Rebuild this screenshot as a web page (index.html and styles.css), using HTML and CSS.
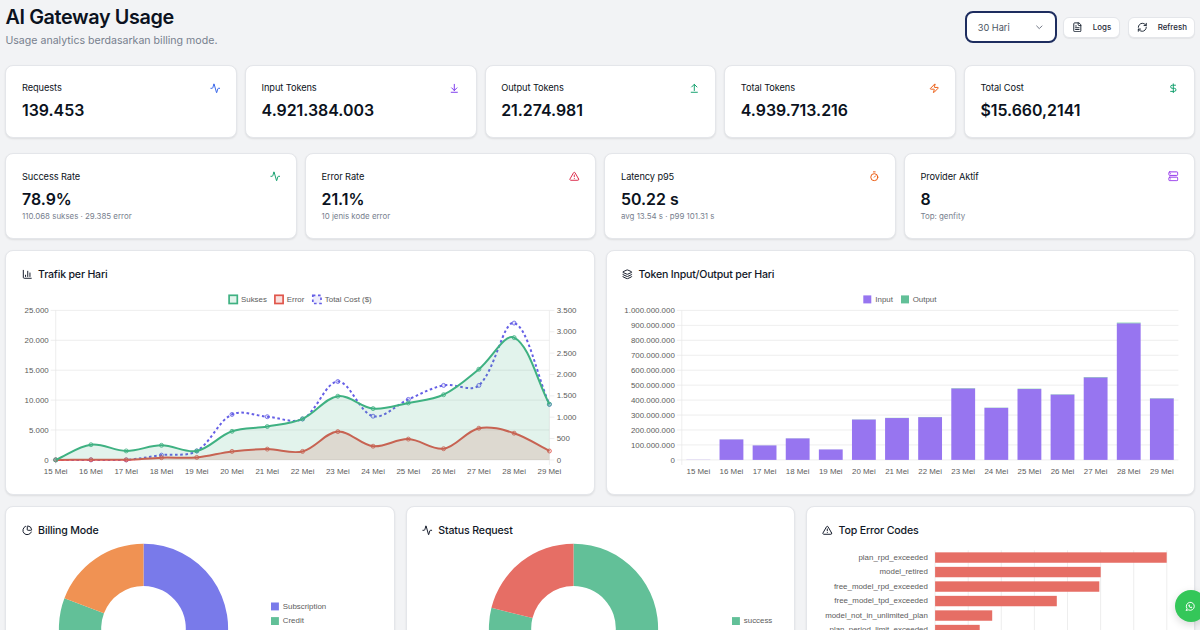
FILE: index.html
```html
<!DOCTYPE html>
<html lang="id">

<head>
    <meta charset="UTF-8">
    <meta name="viewport" content="width=device-width, initial-scale=1.0">
    <title>AI Gateway Usage</title>
    <link rel="stylesheet" href="styles.css">
</head>

<body>
    <!-- Icon set -->
    <svg class="icon-defs" aria-hidden="true">
        <symbol id="i-activity" viewBox="0 0 24 24"><path d="M22 12h-2.48a2 2 0 0 0-1.93 1.46l-2.35 8.36a.25.25 0 0 1-.48 0L9.24 2.18a.25.25 0 0 0-.48 0l-2.35 8.36A2 2 0 0 1 4.49 12H2"/></symbol>
        <symbol id="i-down" viewBox="0 0 24 24"><path d="M12 17V3M6 11l6 6 6-6M19 21H5"/></symbol>
        <symbol id="i-up" viewBox="0 0 24 24"><path d="m18 9-6-6-6 6M12 3v14M5 21h14"/></symbol>
        <symbol id="i-zap" viewBox="0 0 24 24"><path d="M4 14a1 1 0 0 1-.78-1.63l9.9-10.2a.5.5 0 0 1 .86.46l-1.92 6.02A1 1 0 0 0 13 10h7a1 1 0 0 1 .78 1.63l-9.9 10.2a.5.5 0 0 1-.86-.46l1.92-6.02A1 1 0 0 0 11 14z"/></symbol>
        <symbol id="i-dollar" viewBox="0 0 24 24"><path d="M12 2v20M17 5H9.5a3.5 3.5 0 0 0 0 7h5a3.5 3.5 0 0 1 0 7H6"/></symbol>
        <symbol id="i-alert" viewBox="0 0 24 24"><path d="m21.73 18-8-14a2 2 0 0 0-3.48 0l-8 14A2 2 0 0 0 4 21h16a2 2 0 0 0 1.73-3M12 9v4M12 17h.01"/></symbol>
        <symbol id="i-timer" viewBox="0 0 24 24"><path d="M10 2h4M12 14l3-3"/><circle cx="12" cy="14" r="8"/></symbol>
        <symbol id="i-server" viewBox="0 0 24 24"><rect x="2" y="2" width="20" height="8" rx="2"/><rect x="2" y="14" width="20" height="8" rx="2"/><path d="M6 6h.01M6 18h.01"/></symbol>
        <symbol id="i-chart" viewBox="0 0 24 24"><path d="M3 3v16a2 2 0 0 0 2 2h16M18 17V9M13 17V5M8 17v-3"/></symbol>
        <symbol id="i-layers" viewBox="0 0 24 24"><path d="M12.83 2.18a2 2 0 0 0-1.66 0L2.6 6.08a1 1 0 0 0 0 1.83l8.58 3.91a2 2 0 0 0 1.66 0l8.58-3.9a1 1 0 0 0 0-1.83zM2 12a1 1 0 0 0 .58.91l8.6 3.91a2 2 0 0 0 1.65 0l8.58-3.9A1 1 0 0 0 22 12M2 17a1 1 0 0 0 .58.91l8.6 3.91a2 2 0 0 0 1.65 0l8.58-3.9A1 1 0 0 0 22 17"/></symbol>
        <symbol id="i-pie" viewBox="0 0 24 24"><path d="M21 12c.552 0 1.005-.449.95-.998a10 10 0 0 0-8.953-8.951c-.55-.055-.998.398-.998.95v8a1 1 0 0 0 1 1zM21.21 15.89A10 10 0 1 1 8 2.83"/></symbol>
        <symbol id="i-file" viewBox="0 0 24 24"><path d="M15 2H6a2 2 0 0 0-2 2v16a2 2 0 0 0 2 2h12a2 2 0 0 0 2-2V7zM14 2v4a2 2 0 0 0 2 2h4M10 9H8M16 13H8M16 17H8"/></symbol>
        <symbol id="i-refresh" viewBox="0 0 24 24"><path d="M3 12a9 9 0 0 1 9-9 9.75 9.75 0 0 1 6.74 2.74L21 8M21 3v5h-5M21 12a9 9 0 0 1-9 9 9.75 9.75 0 0 1-6.74-2.74L3 16M8 16H3v5"/></symbol>
        <symbol id="i-chevron" viewBox="0 0 24 24"><path d="m6 9 6 6 6-6"/></symbol>
        <symbol id="i-whatsapp" viewBox="0 0 24 24"><path d="M3 21l1.65-3.8a9 9 0 1 1 3.4 2.9L3 21M9 10a.5.5 0 0 0 1 0V9a.5.5 0 0 0-1 0v1a5 5 0 0 0 5 5h1a.5.5 0 0 0 0-1h-1a.5.5 0 0 0 0 1"/></symbol>
    </svg>

    <header class="page-header">
        <div>
            <h1>AI Gateway Usage</h1>
            <p>Usage analytics berdasarkan billing mode.</p>
        </div>
        <div class="actions">
            <button class="select">30 Hari <svg class="icon"><use href="#i-chevron"/></svg></button>
            <button class="btn"><svg class="icon"><use href="#i-file"/></svg>Logs</button>
            <button class="btn"><svg class="icon"><use href="#i-refresh"/></svg>Refresh</button>
        </div>
    </header>

    <section class="grid stats-5">
        <div class="card stat">
            <div class="stat-label">Requests <svg class="icon blue"><use href="#i-activity"/></svg></div>
            <div class="stat-value">139.453</div>
        </div>
        <div class="card stat">
            <div class="stat-label">Input Tokens <svg class="icon violet"><use href="#i-down"/></svg></div>
            <div class="stat-value">4.921.384.003</div>
        </div>
        <div class="card stat">
            <div class="stat-label">Output Tokens <svg class="icon green"><use href="#i-up"/></svg></div>
            <div class="stat-value">21.274.981</div>
        </div>
        <div class="card stat">
            <div class="stat-label">Total Tokens <svg class="icon orange"><use href="#i-zap"/></svg></div>
            <div class="stat-value">4.939.713.216</div>
        </div>
        <div class="card stat">
            <div class="stat-label">Total Cost <svg class="icon green"><use href="#i-dollar"/></svg></div>
            <div class="stat-value">$15.660,2141</div>
        </div>
    </section>

    <section class="grid stats-4">
        <div class="card stat">
            <div class="stat-label">Success Rate <svg class="icon green"><use href="#i-activity"/></svg></div>
            <div class="stat-value">78.9%</div>
            <div class="stat-note">110.068 sukses · 29.385 error</div>
        </div>
        <div class="card stat">
            <div class="stat-label">Error Rate <svg class="icon red"><use href="#i-alert"/></svg></div>
            <div class="stat-value">21.1%</div>
            <div class="stat-note">10 jenis kode error</div>
        </div>
        <div class="card stat">
            <div class="stat-label">Latency p95 <svg class="icon orange"><use href="#i-timer"/></svg></div>
            <div class="stat-value">50.22 s</div>
            <div class="stat-note">avg 13.54 s · p99 101.31 s</div>
        </div>
        <div class="card stat">
            <div class="stat-label">Provider Aktif <svg class="icon purple"><use href="#i-server"/></svg></div>
            <div class="stat-value">8</div>
            <div class="stat-note">Top: genfity</div>
        </div>
    </section>

    <section class="grid charts-2">
        <div class="card chart-card">
            <h2><svg class="icon"><use href="#i-chart"/></svg>Trafik per Hari</h2>
            <svg id="trafficChart" class="chart"></svg>
        </div>
        <div class="card chart-card">
            <h2><svg class="icon"><use href="#i-layers"/></svg>Token Input/Output per Hari</h2>
            <svg id="tokenChart" class="chart"></svg>
        </div>
    </section>

    <section class="grid charts-3">
        <div class="card chart-card">
            <h2><svg class="icon"><use href="#i-pie"/></svg>Billing Mode</h2>
            <svg id="billingChart" class="chart"></svg>
        </div>
        <div class="card chart-card">
            <h2><svg class="icon"><use href="#i-activity"/></svg>Status Request</h2>
            <svg id="statusChart" class="chart"></svg>
        </div>
        <div class="card chart-card">
            <h2><svg class="icon"><use href="#i-alert"/></svg>Top Error Codes</h2>
            <svg id="errorChart" class="chart"></svg>
        </div>
    </section>

    <a class="whatsapp"><svg class="icon"><use href="#i-whatsapp"/></svg></a>

    <script src="charts.js"></script>
</body>

</html>
```
FILE: styles.css
```css
:root {
    --bg: #f2f3f5;
    --text: #0b1220;
    --muted: #77808e;
    --border: #e4e6ea;
    --navy: #1e2d5f;
}

* {
    margin: 0;
    padding: 0;
    box-sizing: border-box;
}

html {
    overflow: hidden;
}

body {
    background: var(--bg);
    color: var(--text);
    font-family: Inter, "Liberation Sans", sans-serif;
    height: 630px;
    padding: 5px 4.6px 0 5.4px;
    overflow: hidden;
}

.icon-defs {
    display: none;
}

.icon {
    width: 10.6px;
    height: 10.6px;
    flex: none;
    fill: none;
    stroke: currentColor;
    stroke-width: 2.2;
    stroke-linecap: round;
    stroke-linejoin: round;
}

.blue { color: #3563e9; }
.violet { color: #7c3aed; }
.purple { color: #9333ea; }
.green { color: #0f9f6b; }
.orange { color: #ea580c; }
.red { color: #dc2647; }

/* Header */
.page-header {
    display: flex;
    justify-content: space-between;
    height: 60.2px;
}

h1 {
    font-size: 19.8px;
    line-height: 25px;
    font-weight: 600;
    letter-spacing: -0.36px;
}

.page-header p {
    margin-top: 4px;
    font-size: 10.6px;
    line-height: 14px;
    color: var(--muted);
}

.actions {
    display: flex;
    align-items: center;
    height: 44px;
    gap: 8px;
}

button {
    display: flex;
    align-items: center;
    font-family: inherit;
    color: #1f2937;
    background: #fff;
}

.select {
    width: 91.5px;
    height: 32px;
    margin-right: -2px;
    padding: 0 10.5px;
    justify-content: space-between;
    border: 2px solid var(--navy);
    border-radius: 8px;
    font-size: 9.24px;
    color: #4b5563;
}

.select .icon {
    color: #6b7280;
}

.btn {
    height: 21px;
    padding: 0 7.5px 0 8px;
    gap: 10.5px;
    border: 1px solid var(--border);
    border-radius: 6px;
    font-size: 7.9px;
    font-weight: 450;
    box-shadow: 0 1px 1px rgba(0, 0, 0, 0.06);
}

/* Cards */
.grid {
    display: grid;
}

.card {
    background: #fff;
    border: 1px solid var(--border);
    border-radius: 8px;
    padding: 0 15.6px;
    box-shadow: 0 1px 2px rgba(0, 0, 0, 0.09);
}

.stats-5 {
    grid-template-columns: repeat(5, 1fr);
    gap: 8px;
    height: 72.5px;
    margin-bottom: 15.6px;
}

.stats-4 {
    grid-template-columns: repeat(4, 1fr);
    gap: 8px;
    height: 86px;
    margin-bottom: 11px;
}

.stat {
    padding-top: 15.3px;
}

.stats-4 .stat {
    padding-top: 16px;
}

.stat-label {
    display: flex;
    justify-content: space-between;
    align-items: center;
    height: 13px;
    font-size: 9.24px;
    letter-spacing: -0.08px;
}

.stat-value {
    margin-top: 6px;
    font-size: 15.9px;
    line-height: 21px;
    font-weight: 600;
}

.stat-note {
    margin-top: 1px;
    font-size: 7.9px;
    line-height: 10px;
    color: var(--muted);
}

/* Charts */
.charts-2 {
    grid-template-columns: repeat(2, 1fr);
    gap: 10.6px;
    height: 244.5px;
    margin-bottom: 11px;
}

.charts-3 {
    grid-template-columns: repeat(3, 1fr);
    gap: 10.6px;
    height: 240px;
}

.chart-card {
    padding-top: 17px;
}

h2 {
    display: flex;
    align-items: center;
    gap: 5.5px;
    height: 13px;
    font-size: 10.6px;
    font-weight: 500;
    letter-spacing: -0.2px;
    color: #111827;
}

.charts-3 h2 {
    letter-spacing: -0.15px;
}

.chart {
    display: block;
    width: 100%;
    height: 190px;
    margin-top: 10.4px;
    overflow: visible;
    font-family: "Liberation Sans", Arial, sans-serif;
    font-size: 7.9px;
    fill: #5c5c5c;
}

.whatsapp {
    position: fixed;
    left: 1175px;
    top: 590px;
    width: 32px;
    height: 32px;
    border-radius: 50%;
    display: flex;
    align-items: center;
    padding-left: 10px;
    background: #34c759;
    color: #fff;
    box-shadow: 0 3px 8px rgba(0, 0, 0, 0.15);
}
```
FILE: charts.js
```js
const GREEN = '#3fb182';
const RED = '#e0564b';
const INDIGO = '#655fe6';
const GRID = '#e6e6e6';

const days = [15, 16, 17, 18, 19, 20, 21, 22, 23, 24, 25, 26, 27, 28, 29].map(d => d + ' Mei');
const sukses = [0, 2540, 1500, 2440, 1500, 4780, 5580, 6870, 10650, 8580, 9520, 10900, 15160, 20450, 9320];
const errors = [0, 30, 10, 370, 420, 1420, 1805, 1420, 4730, 2290, 3480, 1870, 5300, 4465, 1490];
const cost = [0, 0, 0, 112, 208, 1064, 1011, 957, 1835, 1023, 1416, 1744, 1744, 3203, 1299];
const inputTokens = [1, 137, 97, 144, 70, 270, 280, 286, 478, 348, 474, 437, 552, 914, 411];

// Small SVG helpers
function line(x1, y1, x2, y2, color = GRID) {
    return `<line x1="${x1}" y1="${y1}" x2="${x2}" y2="${y2}" stroke="${color}" stroke-width="0.7"/>`;
}

function text(x, y, str, anchor = 'start') {
    return `<text x="${x}" y="${y}" text-anchor="${anchor}">${str}</text>`;
}

function rect(x, y, w, h, fill, extra = '') {
    return `<rect x="${x}" y="${y}" width="${w}" height="${h}" fill="${fill}" ${extra}/>`;
}

const format = n => n.toLocaleString('de-DE');

// Bezier curve through the points, control points scaled by distance
function spline(pts, top, bottom) {
    const t = 0.35;
    const clamp = y => Math.min(bottom, Math.max(top, y));
    const ctrl = pts.map((p, i) => {
        const a = pts[i - 1] || p;
        const b = pts[i + 1] || p;
        const d1 = Math.hypot(p[0] - a[0], p[1] - a[1]);
        const d2 = Math.hypot(b[0] - p[0], b[1] - p[1]);
        const fa = t * d1 / (d1 + d2);
        const fb = t * d2 / (d1 + d2);
        return {
            prev: [p[0] - fa * (b[0] - a[0]), clamp(p[1] - fa * (b[1] - a[1]))],
            next: [p[0] + fb * (b[0] - a[0]), clamp(p[1] + fb * (b[1] - a[1]))]
        };
    });
    let d = `M${pts[0]}`;
    for (let i = 1; i < pts.length; i++) {
        d += ` C${ctrl[i - 1].next} ${ctrl[i].prev} ${pts[i]}`;
    }
    return d;
}

function drawTraffic() {
    const left = 33.7, right = 527.4, top = 18.4, bottom = 167.9;
    const step = (right - left) / 14;
    let out = '';

    for (let i = 0; i <= 5; i++) {
        const y = bottom - i * (bottom - top) / 5;
        out += line(left - 5, y, right, y) + text(left - 7, y + 2.6, format(i * 5000), 'end');
    }
    for (let i = 0; i <= 7; i++) {
        const y = bottom - i * (bottom - top) / 7;
        out += line(right, y, right + 5, y) + text(right + 7.3, y + 2.6, format(i * 500));
    }
    out += line(left, top, left, bottom + 5) + line(right, top, right, bottom + 5);
    days.forEach((d, i) => out += text(left + i * step, bottom + 14.4, d, 'middle'));

    const series = [
        { data: cost, max: 3500, color: INDIGO, dash: true },
        { data: errors, max: 25000, color: RED, fill: 0.18 },
        { data: sukses, max: 25000, color: GREEN, fill: 0.15 }
    ];
    for (const s of series) {
        const pts = s.data.map((v, i) => [left + i * step, bottom - v / s.max * (bottom - top)]);
        const d = spline(pts, top, bottom);
        if (s.fill) {
            out += `<path d="${d} L${right} ${bottom} L${left} ${bottom}Z" fill="${s.color}" fill-opacity="${s.fill}"/>`;
        }
        out += `<path d="${d}" fill="none" stroke="${s.color}" stroke-width="2" ${s.dash ? 'stroke-dasharray="2.6 2.6"' : ''}/>`;
        for (const p of pts) {
            out += `<circle cx="${p[0]}" cy="${p[1]}" r="2" fill="${s.color}" fill-opacity="0.15" stroke="${s.color}" stroke-width="0.8"/>`;
        }
    }

    out += rect(207.1, 3.3, 8.2, 8.2, '#e2f4ec', `stroke="${GREEN}" stroke-width="1.7"`) + text(219, 10, 'Sukses');
    out += rect(252.9, 3.3, 8.2, 8.2, '#f9e0de', `stroke="${RED}" stroke-width="1.7"`) + text(264.8, 10, 'Error');
    out += rect(290.8, 3.3, 8.2, 8.2, '#eeedfc', `stroke="${INDIGO}" stroke-width="1.7" stroke-dasharray="2.6 2.6"`) + text(302.8, 10, 'Total Cost ($)');
    document.getElementById('trafficChart').innerHTML = out;
}

function drawTokens() {
    const left = 59.8, right = 556.4, top = 18.4, bottom = 167.9;
    const step = (right - left) / 15;
    const scale = (bottom - top) / 1000;
    let out = '';

    for (let i = 0; i <= 10; i++) {
        const y = bottom - i * (bottom - top) / 10;
        out += line(left - 5, y, right, y) + text(left - 7, y + 2.6, format(i * 1e8), 'end');
    }
    out += line(left, top, left, bottom + 5);

    inputTokens.forEach((v, i) => {
        const x = left + step * (i + 0.14);
        const h = v * scale;
        out += rect(x, bottom - h, step * 0.72, h, '#9775f0');
        out += rect(x, bottom - h * 1.0043, step * 0.72, h * 0.0043, '#62c098');
        out += text(left + step * (i + 0.5), bottom + 14.4, days[i], 'middle');
    });

    out += rect(241.3, 3.4, 8, 8, '#9775f0') + text(253.3, 10, 'Input');
    out += rect(279, 3.4, 8, 8, '#62c098') + text(290.7, 10, 'Output');
    document.getElementById('tokenChart').innerHTML = out;
}

// Doughnut slices are given as [start, end, color], shares of a full turn
function drawDoughnut(id, cx, slices, legend) {
    const cy = 81.3, outer = 84.6, inner = 42.3;
    const at = (r, share) => {
        const a = share * 2 * Math.PI;
        return `${cx + r * Math.sin(a)} ${cy - r * Math.cos(a)}`;
    };
    let out = '';
    for (const [from, to, color] of slices) {
        const large = to - from > 0.5 ? 1 : 0;
        out += `<path fill="${color}" d="M${at(outer, from)} A${outer} ${outer} 0 ${large} 1 ${at(outer, to)} L${at(inner, to)} A${inner} ${inner} 0 ${large} 0 ${at(inner, from)}Z"/>`;
    }
    for (const [x, y, color, label] of legend) {
        out += rect(x, y - 3.5, 7.9, 7.9, color) + text(x + 11.8, y + 2.6, label);
    }
    document.getElementById(id).innerHTML = out;
}

function drawErrors() {
    const left = 113.1, top = 3.3, step = 14.5;
    const rows = [
        ['plan_rpd_exceeded', 231.6],
        ['model_retired', 165.6],
        ['free_model_rpd_exceeded', 164.2],
        ['free_model_tpd_exceeded', 121.7],
        ['model_not_in_unlimited_plan', 57.1],
        ['plan_period_limit_exceeded', 44.6]
    ];
    let out = '';
    for (let i = 0; i <= 7; i++) {
        out += line(left + i * 33.1, top, left + i * 33.1, top + 145);
    }
    rows.forEach(([label, w], i) => {
        const y = top + step * (i + 0.5);
        out += rect(left, y - 5.2, w, 10.4, '#e66e65') + text(left - 7.3, y + 2.3, label, 'end');
    });
    document.getElementById('errorChart').innerHTML = out;
}

drawTraffic();
drawTokens();
drawDoughnut('billingChart', 121.5, [
    [0, 0.6, '#797aea'],
    [0.6, 0.8078, '#62c098'],
    [0.8078, 1, '#f09253']
], [
    [249, 59, '#797aea', 'Subscription'],
    [249, 73.6, '#62c098', 'Credit']
]);
drawDoughnut('statusChart', 151.5, [
    [0, 0.789, '#62c098'],
    [0.789, 1, '#e66e65']
], [
    [310, 73.6, '#62c098', 'success']
]);
drawErrors();
```
